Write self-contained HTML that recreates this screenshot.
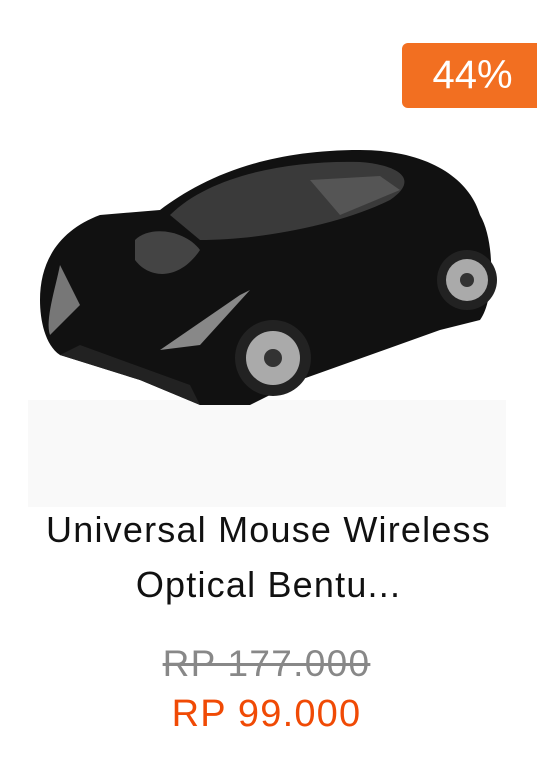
<!DOCTYPE html>
<html><head><style>
body{margin:0;width:537px;height:769px;background:#fff;position:relative;overflow:hidden;font-family:"Liberation Sans",sans-serif}
.badge{position:absolute;left:402px;top:43px;width:135px;height:65px;background:#f26f21;border-radius:6px 0 0 6px;color:#fff;font-size:40px;line-height:65px;text-align:center;padding-left:6px;box-sizing:border-box}
.title{position:absolute;left:0;width:537px;top:502px;text-align:center;font-size:36px;letter-spacing:1.2px;line-height:55px;color:#111}
.old{position:absolute;left:0;width:533px;top:643px;text-align:center;font-size:37px;letter-spacing:1.3px;color:#888;text-decoration:line-through}
.new{position:absolute;left:0;width:533px;top:693px;text-align:center;font-size:38px;letter-spacing:1.2px;color:#f04a05}
</style></head><body>
<svg style="position:absolute;left:0;top:0" width="537" height="510">
<rect x="28" y="400" width="478" height="107" fill="#f9f9f9"/>
<path d="M40 300 C40 260 60 230 100 215 L160 210 C200 180 260 150 360 150 C430 150 470 180 480 215 C495 240 495 300 480 320 L440 330 L300 380 L250 405 L200 405 L140 380 L60 355 C45 345 40 320 40 300Z" fill="#111"/>
<path d="M170 215 C210 175 290 160 360 162 C400 165 420 180 390 200 C340 225 260 240 200 240 Z" fill="#3a3a3a"/>
<path d="M310 180 L380 176 L400 190 L340 215 Z" fill="#555"/>
<path d="M60 265 C55 290 45 320 50 335 L80 305 Z" fill="#777"/>
<path d="M160 350 L240 295 L250 290 L200 345 Z" fill="#888"/>
<path d="M135 240 C150 225 185 230 200 250 C180 280 150 280 135 260Z" fill="#444"/>
<circle cx="273" cy="358" r="38" fill="#222"/><circle cx="273" cy="358" r="27" fill="#aaa"/><circle cx="273" cy="358" r="9" fill="#333"/>
<circle cx="467" cy="280" r="30" fill="#222"/><circle cx="467" cy="280" r="21" fill="#aaa"/><circle cx="467" cy="280" r="7" fill="#333"/>
<path d="M60 355 L140 380 L200 405 L190 385 L80 345Z" fill="#222"/>
</svg>
<div class="badge">44%</div>
<div class="title">Universal Mouse Wireless<br>Optical Bentu...</div>
<div class="old">RP 177.000</div>
<div class="new">RP 99.000</div>
</body></html>
